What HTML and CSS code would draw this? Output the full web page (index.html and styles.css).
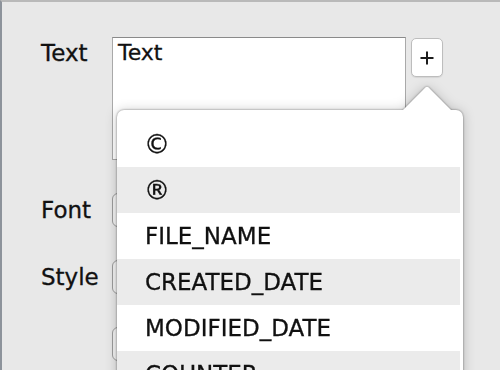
FILE: index.html
```html
<!DOCTYPE html>
<html lang="en">
<head>
    <meta charset="UTF-8">
    <title>Watermark Text</title>
    <link rel="stylesheet" href="styles.css">
</head>
<body>
    <div class="window">
        <div class="form">
            <div class="row row-text">
                <span class="label">Text</span>
                <div class="text-field">
                    <div class="text-input">Text</div>
                    <button class="add-btn" aria-label="Insert">
                        <svg width="16" height="16" viewBox="0 0 16 16">
                            <path d="M8 1.5v13M1.5 8h13" stroke="#1c1c1c" stroke-width="2" fill="none"/>
                        </svg>
                    </button>
                </div>
            </div>
            <div class="row">
                <span class="label">Font</span>
                <div class="popup-btn"></div>
            </div>
            <div class="row">
                <span class="label">Style</span>
                <div class="popup-btn"></div>
            </div>
            <div class="row">
                <span class="label"></span>
                <div class="popup-btn"></div>
            </div>
        </div>

        <!-- menu of the + button -->
        <div class="menu">
            <ul class="menu-list">
                <li class="symbol">©</li>
                <li class="symbol">®</li>
                <li>FILE_NAME</li>
                <li>CREATED_DATE</li>
                <li>MODIFIED_DATE</li>
                <li>COUNTER</li>
            </ul>
        </div>
    </div>
</body>
</html>
```

FILE: styles.css
```css
:root {
    --window-bg: #e8e8e8;
    --row-alt: #ebebeb;
    --text: #111;
    --field-border: #a9a9a9;
}

html, body {
    margin: 0;
    height: 100%;
    overflow: hidden;
}

body {
    font-family: "DejaVu Sans", "Liberation Sans", sans-serif;
    color: var(--text);
    background: var(--window-bg);
    -webkit-text-stroke: 0.3px currentColor;
}

.window {
    position: relative;
    height: 100%;
    box-sizing: border-box;
    border-top: 2px solid #b9b9b9;
    border-left: 2px solid #8d939b;
    background: var(--window-bg);
}

.form {
    display: flex;
    flex-direction: column;
    gap: 33px;
    padding: 35px 0 0 39px;
}

.row {
    display: grid;
    grid-template-columns: 71px auto;
    align-items: center;
}

.row-text {
    align-items: start;
}

.label {
    font-size: 23px;
    line-height: 26px;
}

.row-text .label {
    margin-top: 3px;
}

.text-field {
    display: flex;
    gap: 5px;
}

.text-input {
    width: 294px;
    height: 123px;
    box-sizing: border-box;
    padding: 2px 5px;
    background: #fff;
    border: 1px solid var(--field-border);
    border-top-color: #8a8a8a;
    font-size: 22px;
    line-height: 26px;
}

.add-btn {
    width: 32px;
    height: 39px;
    margin-top: 1px;
    padding: 0;
    display: flex;
    align-items: center;
    justify-content: center;
    background: #fff;
    border: 1px solid #bdbdbd;
    border-radius: 5px;
    box-shadow: 0 1px 1px rgba(0, 0, 0, 0.08);
}

.popup-btn {
    width: 220px;
    height: 34px;
    box-sizing: border-box;
    border: 1px solid #9c9c9c;
    border-radius: 6px;
    background: #f2f2f2;
}

/* popover menu */
.menu {
    position: absolute;
    left: 115px;
    top: 108px;
    width: 346px;
    height: 300px;
    background: #fff;
    border-radius: 7px 7px 0 0;
    filter: drop-shadow(0 0 1px rgba(0, 0, 0, 0.45)) drop-shadow(0 1px 6px rgba(0, 0, 0, 0.22));
}

.menu::before {
    content: '';
    position: absolute;
    top: -17px;
    left: 293px;
    width: 34px;
    height: 34px;
    background: #fff;
    transform: rotate(45deg);
    border-radius: 2px 0 0 0;
}

.menu-list {
    position: relative;
    list-style: none;
    margin: 0;
    padding: 11px 3px 0 0;
}

.menu-list li {
    height: 46px;
    padding-left: 28px;
    display: flex;
    align-items: center;
    font-size: 23px;
}

.menu-list li.symbol {
    font-size: 26px;
    padding-left: 27px;
}

.menu-list li:nth-child(even) {
    background: var(--row-alt);
}
```
